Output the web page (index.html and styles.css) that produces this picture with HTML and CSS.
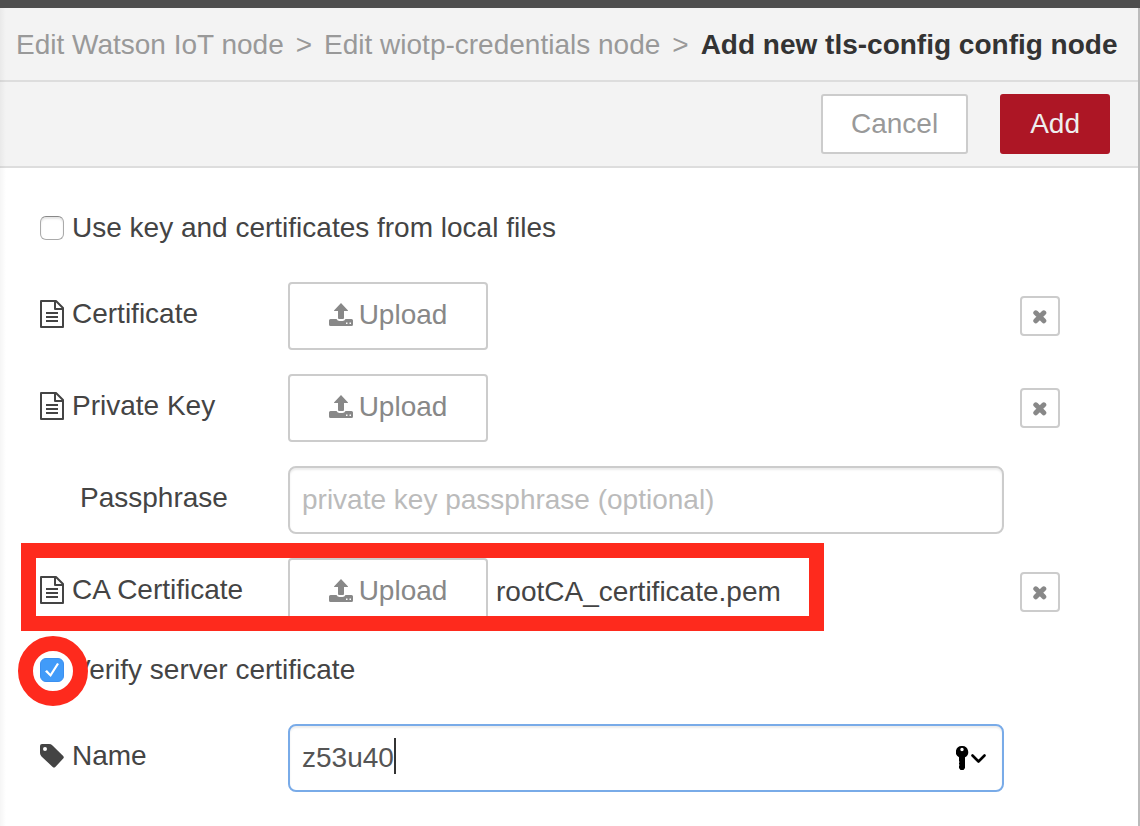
FILE: index.html
```html
<!DOCTYPE html>
<html lang="en">
<head>
<meta charset="utf-8">
<title>Add new tls-config config node</title>
<link rel="stylesheet" href="styles.css">
</head>
<body>
<svg class="sprite" aria-hidden="true">
  <symbol id="i-file" viewBox="0 0 24 28"><path fill="none" stroke="currentColor" stroke-width="2" stroke-linejoin="round" d="M1 1H16L23 8V27H1ZM15 1V9H23"/><path fill="none" stroke="currentColor" stroke-width="2" d="M6 13H18M6 17H18M6 21H18"/></symbol>
  <symbol id="i-upload" viewBox="0 0 24 24"><path fill="currentColor" d="M12 0L19 7.500Q19 8 18.500 8H15V15Q15 16 14 16H10Q9 16 9 15V8H5.500Q5 8 5 7.500Z"/><path fill="currentColor" fill-rule="evenodd" d="M1.500 16H7.500Q8.500 18 10.500 18H13.500Q15.500 18 16.500 16H22.500Q24 16 24 17.500V21.500Q24 23 22.500 23H1.500Q0 23 0 21.500V17.500Q0 16 1.500 16ZM17 19.500V21H18.500V19.500ZM20.500 19.500V21H22V19.500Z"/></symbol>
  <symbol id="i-times" viewBox="0 0 14 14"><path stroke="currentColor" stroke-width="5" stroke-linecap="round" d="M2.800 2.800L10.800 10.800M10.800 2.800L2.800 10.800"/></symbol>
  <symbol id="i-tag" viewBox="0 0 24 24"><path fill="currentColor" fill-rule="evenodd" d="M2 0H9Q11 0 12.500 1.400L23.200 12Q24.400 13.300 23.200 14.600L15.300 23Q14 24.200 12.700 23L1.500 12.400Q0 11 0 9V2Q0 0 2 0ZM5 3A2 2 0 1 0 5 7A2 2 0 1 0 5 3Z"/></symbol>
  <symbol id="i-key" viewBox="0 0 30 24"><path fill="#000" fill-rule="evenodd" d="M6 0A6 6 0 0 1 9 11.300V22L7.500 24H4.500L3 22V20L3.500 19L3 18V17L3.500 16L3 15V11.300A6 6 0 0 1 6 0ZM6 1.800A1.700 1.700 0 1 0 6 5.200A1.700 1.700 0 1 0 6 1.800Z"/><path fill="none" stroke="#000" stroke-width="2.600" stroke-linecap="round" stroke-linejoin="round" d="M16.500 9.500L22.500 15.500L28.500 9.500"/></symbol>
</svg>
<div class="topbar"></div>
<main class="tray">
  <header class="crumbs">
    <span>Edit Watson IoT node</span><span>&gt;</span><span>Edit wiotp-credentials node</span><span>&gt;</span><strong>Add new tls-config config node</strong>
  </header>
  <div class="toolbar">
    <button class="action" type="button">Cancel</button>
    <button class="action primary" type="button">Add</button>
  </div>
  <form class="form">
    <div class="check-row">
      <input class="tick" type="checkbox" id="local"><label for="local">Use key and certificates from local files</label>
    </div>
    <div class="row">
      <label class="name" for="cert"><svg class="file"><use href="#i-file"/></svg>Certificate</label>
      <div class="field"><button class="upload" id="cert" type="button"><svg class="icon"><use href="#i-upload"/></svg>Upload</button></div>
      <button class="clear" type="button" aria-label="Clear certificate"><svg class="times"><use href="#i-times"/></svg></button>
    </div>
    <div class="row">
      <label class="name" for="pkey"><svg class="file"><use href="#i-file"/></svg>Private Key</label>
      <div class="field"><button class="upload" id="pkey" type="button"><svg class="icon"><use href="#i-upload"/></svg>Upload</button></div>
      <button class="clear" type="button" aria-label="Clear private key"><svg class="times"><use href="#i-times"/></svg></button>
    </div>
    <div class="row">
      <label class="name indent" for="pass">Passphrase</label>
      <div class="field"><input class="text" id="pass" type="text" placeholder="private key passphrase (optional)"></div>
    </div>
    <div class="row">
      <label class="name" for="ca"><svg class="file"><use href="#i-file"/></svg>CA Certificate</label>
      <div class="field"><button class="upload" id="ca" type="button"><svg class="icon"><use href="#i-upload"/></svg>Upload</button><span class="filename">rootCA_certificate.pem</span></div>
      <button class="clear" type="button" aria-label="Clear CA certificate"><svg class="times"><use href="#i-times"/></svg></button>
      <span class="mark-box"></span>
    </div>
    <div class="check-row">
      <input class="tick" type="checkbox" id="verify" checked><label for="verify">Verify server certificate</label>
      <span class="mark-ring"></span>
    </div>
    <div class="row">
      <label class="name" for="nm"><svg class="icon"><use href="#i-tag"/></svg>Name</label>
      <div class="field"><input class="text active" id="nm" type="text" value="z53u40"><span class="caret"></span><svg class="key"><use href="#i-key"/></svg></div>
    </div>
  </form>
</main>
</body>
</html>
```
FILE: styles.css
```css
* { box-sizing: border-box; }
body {
  margin: 0;
  min-height: 100vh;
  display: flex;
  flex-direction: column;
  background: #fff;
  color: #444;
  font: 28px/40px "Liberation Sans", Arial, sans-serif;
}
button, input { font: inherit; margin: 0; }
svg { flex: none; }
.sprite { display: none; }
.topbar { height: 8px; background: #4e4e4e; }
.tray {
  flex: 1;
  border-right: 2px solid #bbb;
  background: #fff;
  position: relative;
}
.tray::before {
  content: "";
  position: absolute;
  inset: 0 auto 0 0;
  width: 6px;
  background: linear-gradient(to right, rgba(0, 0, 0, .04), transparent);
}
.crumbs {
  display: flex;
  gap: 12px;
  padding: 17px 16px 15px;
  background: #f3f3f3;
  border-bottom: 2px solid #ddd;
  color: #999;
  white-space: nowrap;
}
.crumbs strong { color: #333; }
.toolbar {
  display: flex;
  justify-content: flex-end;
  gap: 32px;
  padding: 12px 28px;
  background: #f3f3f3;
  border-bottom: 2px solid #ddd;
}
.action {
  height: 60px;
  padding: 0 28px;
  border: 2px solid #ccc;
  border-radius: 3px;
  background: #fff;
  color: #999;
}
.primary { background: #ad1625; border-color: #ad1625; color: #eee; }
.form { padding: 40px 78px 32px 40px; }
.check-row {
  position: relative;
  display: flex;
  align-items: center;
  gap: 8px;
  margin-bottom: 34px;
}
.tick {
  appearance: none;
  width: 24px;
  height: 24px;
  border: 1px solid #aaa;
  border-top-color: #888;
  border-radius: 6px;
  background: #fff;
  box-shadow: inset 0 2px 2px rgba(0, 0, 0, .1);
}
.tick:checked {
  display: grid;
  place-items: center;
  border-color: #3b8ff0;
  background: #419bf9;
  box-shadow: none;
}
.tick:checked::before {
  content: "";
  width: 14px;
  height: 14px;
  background: #fff;
  clip-path: polygon(0 60%, 14% 50%, 38% 76%, 86% 0, 100% 8%, 41% 100%);
}
.row {
  position: relative;
  display: grid;
  grid-template-columns: 248px 1fr 40px;
  align-items: center;
  margin-bottom: 24px;
}
.name { display: flex; align-items: center; gap: 8px; padding-bottom: 4px; }
.indent { padding-left: 40px; }
.file { width: 24px; height: 28px; }
.icon { width: 24px; height: 24px; }
.field {
  position: relative;
  display: flex;
  align-items: center;
  gap: 8px;
  margin-right: 16px;
}
.upload {
  display: flex;
  align-items: center;
  justify-content: center;
  gap: 6px;
  width: 200px;
  height: 68px;
  padding: 0 0 2px;
  border: 2px solid #ccc;
  border-radius: 4px;
  background: #fff;
  color: #888;
}
.clear {
  display: grid;
  place-items: center;
  width: 40px;
  height: 40px;
  padding: 2px 0 0;
  border: 2px solid #ccc;
  border-radius: 4px;
  background: #fff;
  color: #888;
}
.times { width: 14px; height: 14px; }
.text {
  width: 100%;
  height: 68px;
  padding: 0 12px;
  border: 2px solid #ccc;
  border-radius: 8px;
  background: #fff;
  color: #555;
  box-shadow: inset 0 2px 2px rgba(0, 0, 0, .075);
  outline: none;
}
.text::placeholder { color: #bbb; opacity: 1; }
.active { border-color: #79abe8; }
.caret {
  position: absolute;
  left: 106px;
  top: 14px;
  width: 2px;
  height: 36px;
  background: #333;
}
.key {
  position: absolute;
  right: 18px;
  top: 22px;
  width: 30px;
  height: 24px;
}
.mark-box {
  position: absolute;
  inset: -15px 236px -5px -19px;
  border: 15px solid #fe2a1d;
  pointer-events: none;
}
.mark-ring {
  position: absolute;
  left: -22px;
  top: -14px;
  width: 70px;
  height: 70px;
  border: 15px solid #fe2a1d;
  border-radius: 50%;
  pointer-events: none;
}
```
